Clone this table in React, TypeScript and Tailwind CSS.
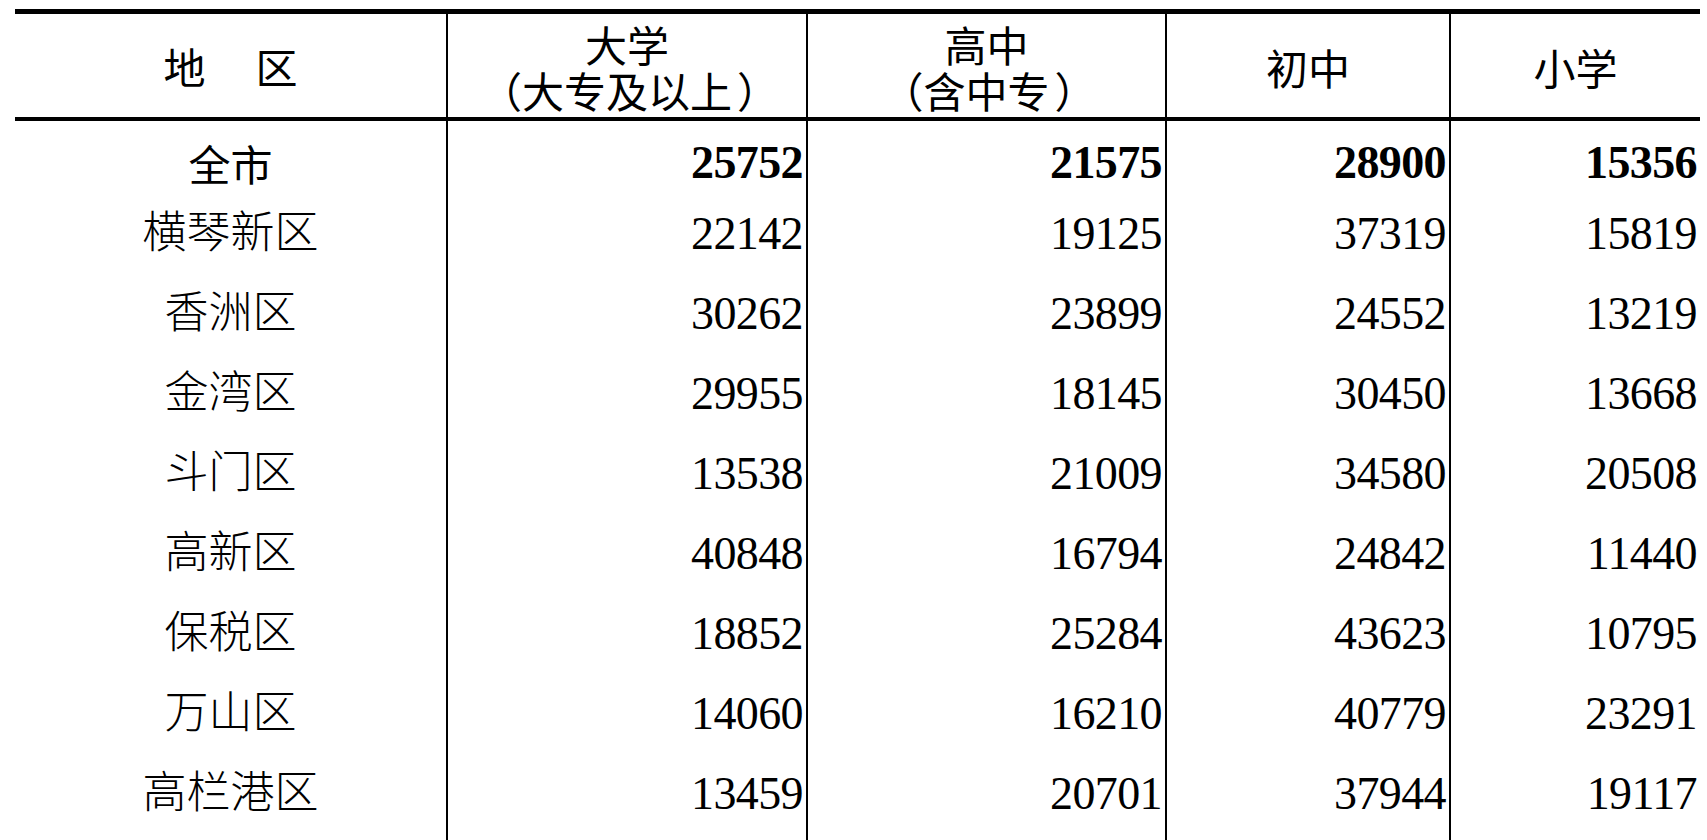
const heads = [
  { top: "大学", sub: "大专及以上" },
  { top: "高中", sub: "含中专" },
  { top: "初中" },
  { top: "小学" },
]

const rows: [string, number, number, number, number][] = [
  ["横琴新区", 22142, 19125, 37319, 15819],
  ["香洲区", 30262, 23899, 24552, 13219],
  ["金湾区", 29955, 18145, 30450, 13668],
  ["斗门区", 13538, 21009, 34580, 20508],
  ["高新区", 40848, 16794, 24842, 11440],
  ["保税区", 18852, 25284, 43623, 10795],
  ["万山区", 14060, 16210, 40779, 23291],
  ["高栏港区", 13459, 20701, 37944, 19117],
]

const cols = "grid grid-cols-[431px_360px_359px_284px_251px]"
const hei = "font-['Noto_Sans_CJK_SC','Noto_Sans',sans-serif]"
const song = "font-['Liberation_Serif','Noto_Sans_CJK_SC',serif]"
const num = "font-['Liberation_Serif',serif] text-[46px] tracking-[-0.6px] leading-none"

export default function App() {
  return (
    <div className="min-h-screen bg-white text-black pt-[9px] pl-[15px] overflow-hidden">
      <div className="w-[1685px]">
        <div className={`${cols} h-[112px] border-t-[5px] border-b-4 border-black ${hei} text-[42px] leading-[46px]`}>
          <div className="flex items-center justify-center gap-[50px]">
            <span>地</span>
            <span>区</span>
          </div>
          {heads.map((h, i) => (
            <div key={i} className="border-l-2 border-black flex flex-col items-center justify-center pt-[2px]">
              <span>{h.top}</span>
              {h.sub && (
                <span className="flex">
                  <span className="inline-block w-[42px] text-right pr-[5px]">（</span>
                  <span>{h.sub}</span>
                  <span className="inline-block w-[42px] text-left pl-[5px]">）</span>
                </span>
              )}
            </div>
          ))}
        </div>

        <div className={`${cols} h-[73px] pt-[11px]`}>
          <div className={`flex items-center justify-center ${hei} text-[42px] leading-none`}>全市</div>
          {[25752, 21575, 28900, 15356].map((v, i) => (
            <div key={i} className={`border-l-2 border-black -mt-[11px] pt-[11px] flex items-center justify-end pr-[3px] ${num} font-bold`}>
              {v}
            </div>
          ))}
        </div>

        {rows.map((r) => (
          <div key={r[0]} className={`${cols} h-[80px]`}>
            <div className={`flex items-center justify-center ${song} text-[44px] font-light leading-none`}>{r[0]}</div>
            {r.slice(1).map((v, i) => (
              <div key={i} className={`border-l-2 border-black flex items-center justify-end pr-[3px] ${num}`}>
                {v}
              </div>
            ))}
          </div>
        ))}

        <div className={`${cols} h-[40px]`}>
          <div />
          <div className="border-l-2 border-black" />
          <div className="border-l-2 border-black" />
          <div className="border-l-2 border-black" />
          <div className="border-l-2 border-black" />
        </div>
      </div>
    </div>
  )
}
